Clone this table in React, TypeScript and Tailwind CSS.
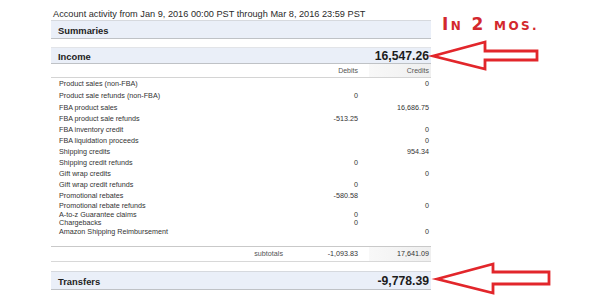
import React from "react"

type Row = {
  label: string
  debit?: string
  credit?: string
  h: string
}

const rows: Row[] = [
  { label: "Product sales (non-FBA)", credit: "0", h: "h-[12px]" },
  { label: "Product sale refunds (non-FBA)", debit: "0", h: "h-[12px]" },
  { label: "FBA product sales", credit: "16,686.75", h: "h-[11px]" },
  { label: "FBA product sale refunds", debit: "-513.25", h: "h-[11px]" },
  { label: "FBA inventory credit", credit: "0", h: "h-[11px]" },
  { label: "FBA liquidation proceeds", credit: "0", h: "h-[11px]" },
  { label: "Shipping credits", credit: "954.34", h: "h-[11px]" },
  { label: "Shipping credit refunds", debit: "0", h: "h-[11px]" },
  { label: "Gift wrap credits", credit: "0", h: "h-[11px]" },
  { label: "Gift wrap credit refunds", debit: "0", h: "h-[11px]" },
  { label: "Promotional rebates", debit: "-580.58", h: "h-[11px]" },
  { label: "Promotional rebate refunds", credit: "0", h: "h-[10px]" },
  { label: "A-to-z Guarantee claims", debit: "0", h: "h-[8px]" },
  { label: "Chargebacks", debit: "0", h: "h-[8px]" },
  { label: "Amazon Shipping Reimbursement", credit: "0", h: "h-[10px]" },
]

function SectionBar({ title, amount, className }: { title: string; amount?: string; className: string }) {
  return (
    <div
      className={`flex items-center justify-between border-t border-b border-t-[#d6d9de] border-b-[#bfc2c6] bg-[#eaeff8] ${className}`}
    >
      <span className="pl-[7px] pt-[2px] text-[9.4px] font-bold leading-none text-[#222]">{title}</span>
      {amount && (
        <span className="pr-[2px] pt-[1px] text-[12.2px] font-bold leading-none text-[#1c1c1c]">{amount}</span>
      )}
    </div>
  )
}

function Arrow({ width, height, points }: { width: number; height: number; points: string }) {
  return (
    <svg width={width} height={height} className="block overflow-visible">
      <polygon points={points} fill="#ffffff" stroke="#e2262b" strokeWidth={2.8} strokeLinejoin="miter" />
    </svg>
  )
}

export default function App() {
  return (
    <div className="flex h-[300px] w-[600px] overflow-hidden bg-white font-['Liberation_Sans',Arial,sans-serif]">
      <div className="ml-[51px] flex w-[380px] flex-col">
        <div className="h-[20px] pl-[2px] pt-[8px] text-[9.2px] leading-[12px] text-[#2a2a2a]">
          Account activity from Jan 9, 2016 00:00 PST through Mar 8, 2016 23:59 PST
        </div>

        <SectionBar title="Summaries" className="h-[19px]" />
        <div className="h-[8px]" />
        <SectionBar title="Income" amount="16,547.26" className="h-[17px] border-t-[#e2e4e8]" />

        <div className="flex h-[14px] items-stretch border-b border-[#d4d4d4] text-[7px] text-[#555]">
          <div className="flex-1" />
          <div className="flex w-[70px] items-center justify-end pt-[1px]">Debits</div>
          <div className="w-[11px]" />
          <div className="flex w-[62px] items-center justify-end bg-gradient-to-r from-[#f8f8f8] to-[#efefef] pr-[2px] pt-[1px]">
            Credits
          </div>
        </div>

        {rows.map((row) => (
          <div key={row.label} className={`flex items-center text-[7.2px] leading-none text-[#333] ${row.h}`}>
            <div className="flex-1 pl-[8px]">{row.label}</div>
            <div className="w-[70px] text-right">{row.debit}</div>
            <div className="w-[11px]" />
            <div className="w-[62px] pr-[2px] text-right">{row.credit}</div>
          </div>
        ))}

        <div className="h-[9px]" />

        <div className="flex h-[16px] items-stretch border-t border-b border-t-[#c9c9c9] border-b-[#d8d8d8] text-[7.2px] text-[#555]">
          <div className="flex flex-1 items-center justify-end pr-[5px] pt-[1px]">subtotals</div>
          <div className="flex w-[70px] items-center justify-end pt-[1px] text-[#333]">-1,093.83</div>
          <div className="w-[11px]" />
          <div className="flex w-[62px] items-center justify-end bg-gradient-to-r from-[#f8f8f8] to-[#efefef] pr-[2px] pt-[1px] text-[#333]">
            17,641.09
          </div>
        </div>

        <div className="h-[9px]" />
        <SectionBar title="Transfers" amount="-9,778.39" className="h-[19px]" />
      </div>

      <div className="flex w-[169px] flex-col">
        <div className="h-[40px] pl-[11px] pt-[16px] font-['DejaVu_Sans',sans-serif] font-bold leading-none tracking-[2.4px] text-[#d3282d]">
          <span className="text-[17px]">I</span>
          <span className="text-[12px]">N</span>
          <span className="text-[17px]"> 2 </span>
          <span className="text-[12px]">MOS.</span>
        </div>
        <Arrow width={110} height={31} points="2,16 54,2 54,11 106,11 106,20 54,20 54,29" />
        <div className="h-[191px]" />
        <Arrow width={122} height={33} points="6,17 62,2 62,10 118,10 118,22 62,22 62,31" />
      </div>
    </div>
  )
}
